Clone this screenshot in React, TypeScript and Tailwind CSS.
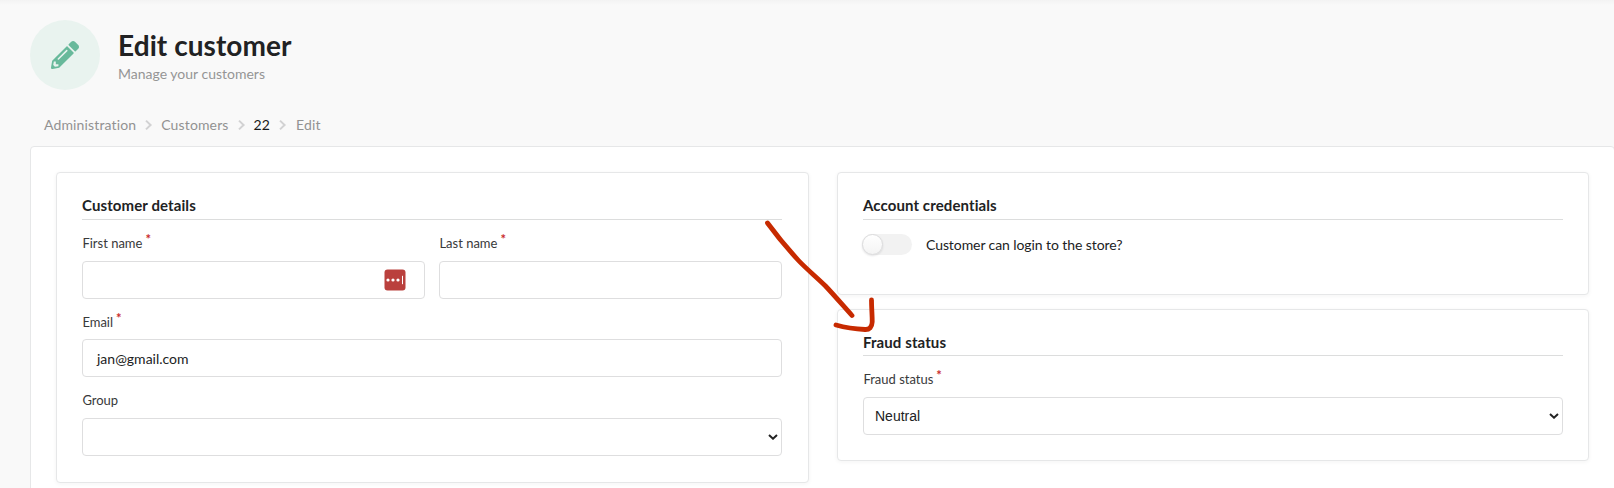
import React from 'react';
import { FaPencilAlt } from 'react-icons/fa';

function Divider() {
  return (
    <svg className="h-[14px] w-[9px] shrink-0" viewBox="0 0 9 14" fill="none" stroke="#d2d2d3" strokeWidth="2">
      <path d="M2 2.6L6.600 7L2 11.4" />
    </svg>
  );
}

function Card({ title, className, headClassName = 'h-[47px] pb-[4px]', children }: { title: string; className: string; headClassName?: string; children: React.ReactNode }) {
  return (
    <section className={`rounded-[4px] border border-[#e6e7e8] bg-white pl-[25px] shadow-[0_1px_4px_rgba(34,36,38,0.05)] ${className}`}>
      <h2 className={`flex items-end border-b border-[#dcdddd] text-[15px] leading-[19px] font-bold tracking-[0.1px] ${headClassName}`}>{title}</h2>
      {children}
    </section>
  );
}

function Label({ text, required = false }: { text: string; required?: boolean }) {
  return (
    <div className="flex h-[18px] items-center pl-[0.4px] text-[13px] leading-[18px] text-[#38393a]">
      {text}
      {required && <span className="-mt-[8px] ml-[3px] text-[13px] leading-[12px] font-bold text-[#c92a2a]">*</span>}
    </div>
  );
}

function Chevron() {
  return (
    <svg className="h-[6px] w-[10px]" viewBox="0 0 10 6" fill="none" stroke="#222" strokeWidth="2">
      <path d="M1 1L5 4.700L9 1" />
    </svg>
  );
}

const box = 'flex h-[38px] items-center rounded-[4px] border border-[#dededf] bg-white';

export default function App() {
  return (
    <div className="relative h-[488px] w-full overflow-hidden bg-[#f9f9f9] pl-[30px] text-[14px] text-[#212223] [font-family:Lato,'Liberation_Sans',sans-serif] [font-variant-ligatures:none]">
      <div className="-ml-[30px] h-[5px] bg-gradient-to-b from-[#f3f3f3] to-[#f9f9f9]" />
      <header className="flex pt-[15px]">
        <div className="flex size-[70px] items-center justify-center rounded-full bg-[#e9f3ef] text-[#68b99b]">
          <FaPencilAlt className="size-[28px]" />
        </div>
        <div className="pt-[7px] pl-[18px]">
          <h1 className="text-[28px] leading-[36px] font-bold tracking-[0.07px]">Edit customer</h1>
          <p className="mt-px text-[14px] leading-[20px] text-[#959595]">Manage your customers</p>
        </div>
      </header>
      <nav className="mt-[25px] flex h-[20px] items-center pl-[14px] text-[14px] leading-[20px] tracking-[0.14px] text-[#929292]">
        <span>Administration</span>
        <span className="mx-[8px] flex"><Divider /></span>
        <span>Customers</span>
        <span className="mx-[8px] flex"><Divider /></span>
        <span className="text-[#18191a]">22</span>
        <span className="mr-[9px] ml-[8px] flex"><Divider /></span>
        <span>Edit</span>
      </nav>
      <main className="mt-[11px] flex h-[400px] w-[1585px] items-start gap-[28px] rounded-[4px] border border-[#e6e7e8] bg-white px-[25px] pt-[25px]">
        <Card title="Customer details" className="h-[311px] w-[753px] shrink-0 pr-[26px]">
          <div className="mt-[14px] flex gap-[14px]">
            <div className="flex-1">
              <Label text="First name" required />
              <div className={`${box} mt-[9px] justify-end pr-[18px]`}>
                <svg className="size-[22px]" viewBox="0 0 22 22">
                  <rect x="0.5" y="0.5" width="21" height="21" rx="3" fill="#ba403d" />
                  <circle cx="4" cy="11" r="1.6" fill="#fff" />
                  <circle cx="9" cy="11" r="1.6" fill="#fff" />
                  <circle cx="14" cy="11" r="1.6" fill="#fff" />
                  <path d="M18.500 6.800v8.400" stroke="#fff" strokeWidth="1" />
                </svg>
              </div>
            </div>
            <div className="flex-1">
              <Label text="Last name" required />
              <div className={`${box} mt-[9px]`} />
            </div>
          </div>
          <div className="mt-[14px]">
            <Label text="Email" required />
            <div className={`${box} mt-[8px] px-[14px]`}>jan@gmail.com</div>
          </div>
          <div className="mt-[14px]">
            <Label text="Group" />
            <div className={`${box} mt-[9px] justify-end pr-[3px]`}><Chevron /></div>
          </div>
        </Card>
        <div className="flex w-[752px] shrink-0 flex-col gap-[14px]">
          <Card title="Account credentials" className="h-[123px] pr-[25px]">
            <div className="mt-[14px] flex h-[21px] items-center">
              <div className="-ml-px h-[21px] w-[50px] rounded-full bg-[#f2f2f2]">
                <div className="size-[21px] rounded-full border border-[#dcdcdd] bg-gradient-to-b from-white to-[#f4f4f4] shadow-[0_1px_2px_rgba(34,36,38,0.12)]" />
              </div>
              <span className="pl-[14px] tracking-[-0.08px]">Customer can login to the store?</span>
            </div>
          </Card>
          <Card title="Fraud status" className="h-[152px] pr-[25px]" headClassName="h-[46px] pb-[3px]">
            <div className="mt-[14px]">
              <Label text="Fraud status" required />
              <div className={`${box} mt-[9px] justify-between pr-[3px] pl-[11px] [font-family:'Liberation_Sans',Arial,sans-serif]`}>
                <span>Neutral</span>
                <Chevron />
              </div>
            </div>
          </Card>
        </div>
      </main>
      <svg className="pointer-events-none absolute top-[210px] left-[755px] h-[130px] w-[130px]" viewBox="755 210 130 130" fill="none" stroke="#c72a00" strokeWidth="4.8" strokeLinecap="round" strokeLinejoin="round">
        <path d="M767.500 223C777 236 787 248 798.500 260.500C807 269.500 817 277.500 825.500 286C834 295 843 305.500 852 315.500" />
        <path d="M871.500 300C871.500 309 872.300 315 872.200 322C872 327 869.500 329.800 865 329.500C855 329 845 327.500 836 325" />
      </svg>
    </div>
  );
}
